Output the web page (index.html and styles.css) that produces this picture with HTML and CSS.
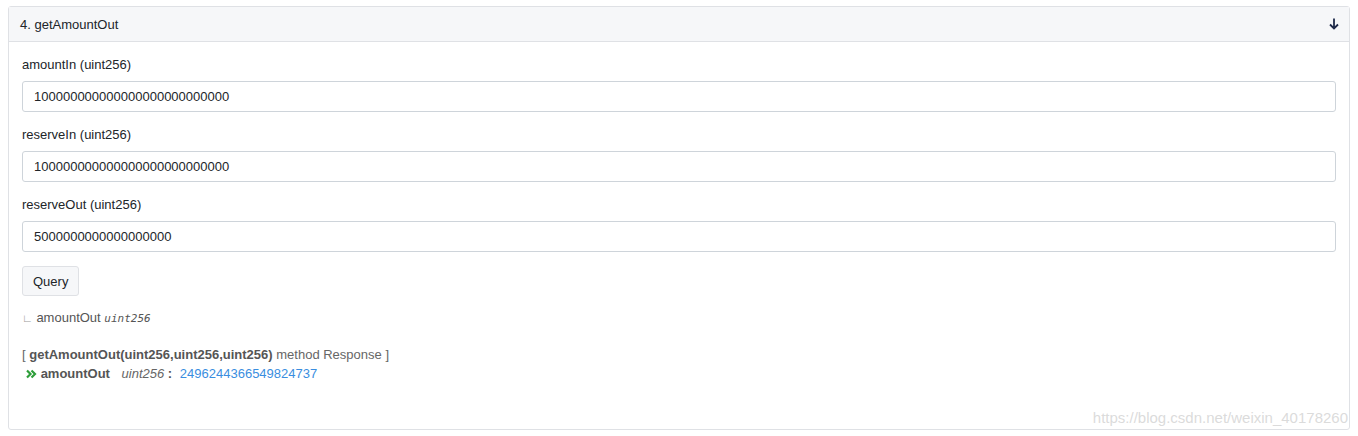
FILE: index.html
```html
<!DOCTYPE html>
<html lang="en">
<head>
    <meta charset="UTF-8">
    <title>getAmountOut</title>
    <link rel="stylesheet" href="styles.css">
</head>
<body>
    <div class="card">
        <div class="card-header">
            <span>4. getAmountOut</span>
            <svg class="arrow" width="12" height="12" viewBox="0 0 12 12">
                <path d="M6 0.5 V10.5 M2 6.5 L6 10.5 L10 6.5" fill="none" stroke="#1f2a4a" stroke-width="1.8"/>
            </svg>
        </div>
        <div class="card-body">
            <div class="field">
                <label>amountIn (uint256)</label>
                <input type="text" value="100000000000000000000000000">
            </div>
            <div class="field">
                <label>reserveIn (uint256)</label>
                <input type="text" value="100000000000000000000000000">
            </div>
            <div class="field">
                <label>reserveOut (uint256)</label>
                <input type="text" value="5000000000000000000">
            </div>
            <button class="query-btn">Query</button>
            <div class="outputs">
                <span class="corner">∟</span> amountOut <i class="type">uint256</i>
            </div>
            <div class="response">
                <div>[ <b>getAmountOut(uint256,uint256,uint256)</b> method Response ]</div>
                <div class="result">
                    <svg class="chev" width="11" height="10" viewBox="0 0 11 10">
                        <path d="M1 1.5 L4.5 5 L1 8.5 M5.5 1.5 L9 5 L5.5 8.5" fill="none" stroke="#2e9e3a" stroke-width="2.2"/>
                    </svg>
                    <b>amountOut</b>
                    <i class="rtype">uint256</i> <b class="colon">:</b>
                    <span class="value">2496244366549824737</span>
                </div>
            </div>
        </div>
    </div>
    <div class="watermark">https://blog.csdn.net/weixin_40178260</div>
</body>
</html>
```

FILE: styles.css
```css
* {
    margin: 0;
    padding: 0;
    box-sizing: border-box;
}
body {
    font-family: "Liberation Sans", Arial, sans-serif;
    font-size: 13px;
    color: #212529;
    background-color: #fff;
    padding: 6px 8px 0 8px;
}
.card {
    border: 1px solid #dfe1e5;
    border-radius: 3px;
    height: 424px;
}
.card-header {
    height: 35px;
    background-color: #f6f7f9;
    border-bottom: 1px solid #dfe1e5;
    display: flex;
    justify-content: space-between;
    align-items: center;
    padding: 0 9px 0 11px;
    color: #212529;
}
.arrow {
    display: block;
}
.card-body {
    padding: 14px 13px 0 13px;
}
.field label {
    display: block;
    line-height: 17px;
    margin-bottom: 8px;
}
.field input {
    display: block;
    width: 100%;
    height: 31px;
    border: 1px solid #ced4da;
    border-radius: 3px;
    padding: 0 11px;
    font-family: "Liberation Sans", Arial, sans-serif;
    font-size: 13px;
    color: #212529;
    margin-bottom: 14px;
}
.query-btn {
    display: block;
    font-family: "Liberation Sans", Arial, sans-serif;
    font-size: 13px;
    color: #212529;
    background-color: #f6f7f9;
    border: 1px solid #dfe1e5;
    border-radius: 3px;
    padding: 0 10px;
    height: 30px;
}
.outputs {
    margin-top: 13px;
    color: #555;
    line-height: 17px;
}
.corner {
    color: #999;
    font-size: 11px;
}
.type {
    font-family: "DejaVu Sans Mono", monospace;
    font-size: 11px;
}
.response {
    margin-top: 18px;
    color: #666;
    line-height: 19px;
}
.response b {
    color: #555;
}
.result {
    padding-left: 4px;
}
.chev {
    vertical-align: -1px;
}
.rtype {
    margin-left: 8px;
}
.colon {
    margin-right: 4px;
}
.value {
    color: #3a8ee0;
}
.watermark {
    position: absolute;
    right: 10px;
    top: 409px;
    font-size: 15px;
    color: rgba(210, 210, 210, 0.8);
}
```
